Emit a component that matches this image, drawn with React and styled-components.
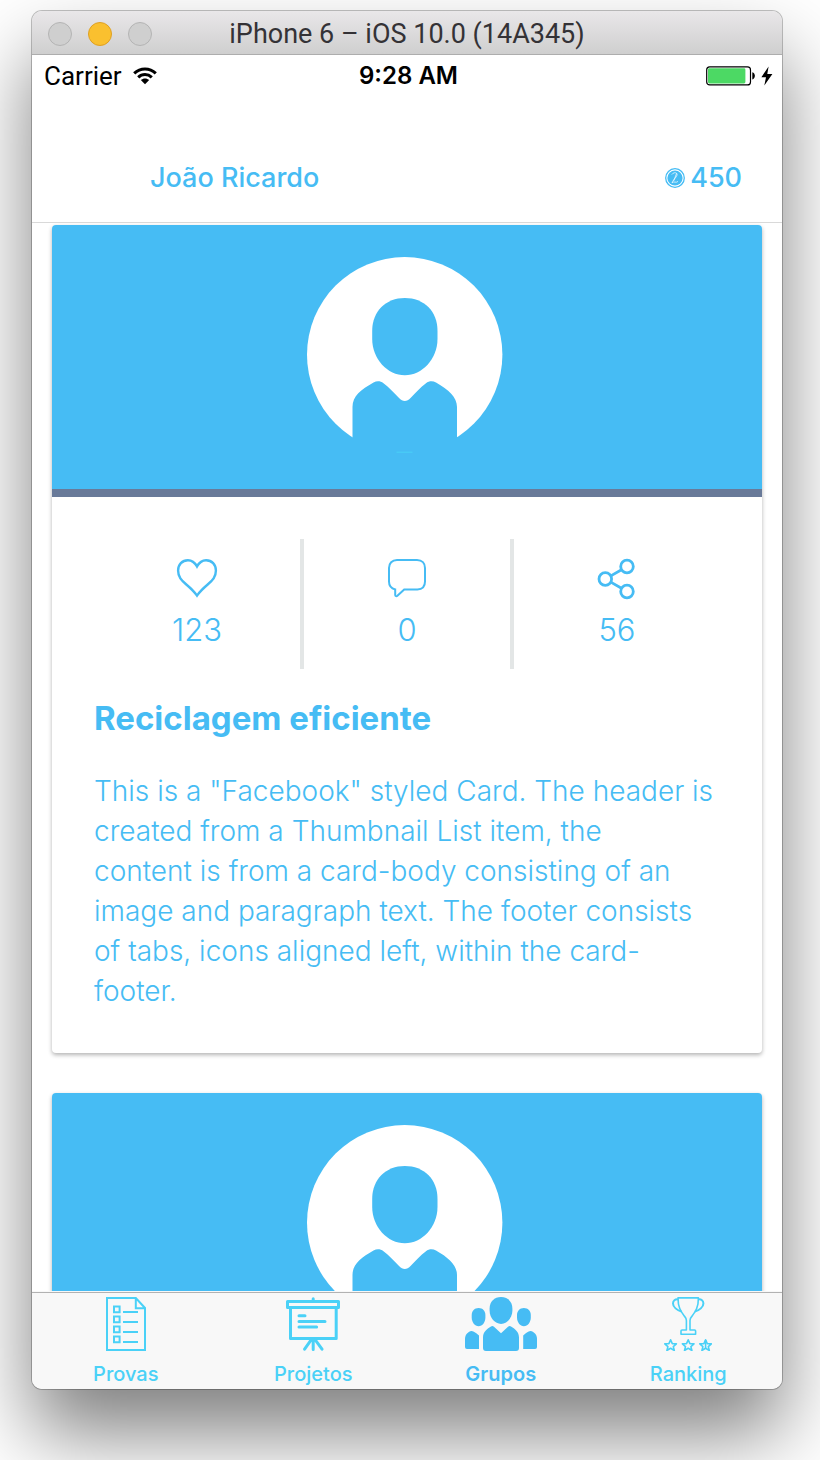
import React from "react";
import styled, { createGlobalStyle } from "styled-components";

const blue = "#46bcf4";
const cyan = "#4ad1f7";

const GlobalStyle = createGlobalStyle`
  *, *::before, *::after { box-sizing: border-box; }
  body {
    margin: 0;
    background: #ffffff;
    font-family: Inter, "Open Sans", sans-serif;
  }
  button { font: inherit; color: inherit; background: none; border: 0; padding: 0; cursor: pointer; }
  a { color: inherit; text-decoration: none; }
  svg { display: block; flex: none; }
`;

const Desktop = styled.div`
  height: 100vh;
  padding: 11px 38px 71px 32px;
  display: flex;
  overflow: hidden;
`;

const Window = styled.div`
  flex: 1;
  min-width: 0;
  display: flex;
  flex-direction: column;
  overflow: hidden;
  border-radius: 10px;
  background: #ffffff;
  box-shadow: 0 0 0 1px rgba(0, 0, 0, 0.24), 0 44px 80px rgba(0, 0, 0, 0.5);
`;

const TitleBar = styled.div`
  flex: none;
  height: 44px;
  padding: 2px 16px 0;
  display: grid;
  grid-template-columns: 1fr auto 1fr;
  align-items: center;
  border-bottom: 1px solid #adadad;
  background: linear-gradient(#e9e7e9, #cfcfcf);
`;

const Lights = styled.div`
  display: flex;
  gap: 16px;
`;

const Light = styled.button`
  width: 24px;
  height: 24px;
  border-radius: 50%;
  border: 1px solid ${(p) => (p.$active ? "#dfa023" : "#b4b4b4")};
  background: ${(p) => (p.$active ? "#fac02f" : "#cfcfcf")};
`;

const WindowTitle = styled.div`
  font-family: Roboto, sans-serif;
  font-size: 27px;
  line-height: 32px;
  color: #343236;
  white-space: nowrap;
`;

const StatusBar = styled.div`
  flex: none;
  height: 40px;
  padding: 2px 9px 0 12px;
  display: grid;
  grid-template-columns: 1fr auto 1fr;
  align-items: center;
  font-size: 24px;
  line-height: 32px;
  color: #000000;
`;

const StatusGroup = styled.div`
  display: flex;
  align-items: center;
  gap: ${(p) => p.$gap}px;
  justify-content: ${(p) => (p.$end ? "flex-end" : "flex-start")};
`;

const Carrier = styled.span`
  font-family: Roboto, sans-serif;
  font-size: 26px;
`;

const Clock = styled.span`
  font-weight: 600;
`;

const NavBar = styled.header`
  flex: none;
  height: 128px;
  padding: 0 40px 0 118px;
  display: flex;
  align-items: flex-end;
  justify-content: space-between;
  border-bottom: 1px solid #d9d9d9;
  color: ${blue};
  font-size: 27px;
  line-height: 32px;
  font-weight: 500;
`;

const UserName = styled.h1`
  margin: 0 0 28px;
  font: inherit;
`;

const Coins = styled.div`
  margin-bottom: 28px;
  display: flex;
  align-items: center;
  gap: 5px;
`;

const Feed = styled.main`
  flex: 1;
  min-height: 0;
  padding: 2px 20px 0;
  overflow-y: auto;
  scrollbar-width: none;
`;

const Card = styled.article`
  margin-bottom: 40px;
  border-radius: 4px;
  overflow: hidden;
  background: #ffffff;
  color: ${blue};
  box-shadow: 0 2px 4px rgba(0, 0, 0, 0.3);
`;

const Banner = styled.div`
  padding: 32px;
  display: flex;
  justify-content: center;
  background: ${blue};
  border-bottom: 8px solid #697a99;
  box-sizing: content-box;
`;

const CardBody = styled.div`
  padding: 42px;
`;

const Stats = styled.div`
  display: flex;
`;

const Stat = styled.button`
  && {
    flex: 1;
    box-sizing: content-box;
    height: 112px;
    padding-top: 18px;
    display: flex;
    flex-direction: column;
    align-items: center;
    gap: 9px;
    font-size: 31px;
    line-height: 40px;
    font-weight: 300;
  }
  &&:not(:last-child) {
    border-right: 4px solid #e3e6e6;
  }
`;

const CardTitle = styled.h2`
  margin: 29px 0 33px;
  font-size: 33px;
  line-height: 40px;
  font-weight: 700;
`;

const CardText = styled.p`
  margin: 0;
  font-size: 28px;
  line-height: 40px;
  font-weight: 300;
  white-space: pre-line;
`;

const TabBar = styled.nav`
  flex: none;
  height: 98px;
  display: flex;
  border-top: 1px solid #f8f8f8;
  background: #f8f8f8;
  box-shadow: inset 0 1px 0 #b2b2b2;
`;

const Tab = styled.a`
  flex: 1;
  padding-top: 5px;
  display: flex;
  flex-direction: column;
  align-items: center;
  gap: 10px;
  font-size: 20px;
  line-height: 26px;
  font-weight: ${(p) => (p.$active ? 600 : 500)};
  && { color: ${(p) => (p.$active ? blue : cyan)}; }
`;

const WifiIcon = () => (
  <svg width="24" height="18" viewBox="0 0 24 18" aria-hidden="true">
    <g fill="none" stroke="#000" strokeWidth="3">
      <path d="M1.2 6.4C7.4 .4 16.6 .4 22.8 6.4" />
      <path d="M5.2 10.4C9.2 6.6 14.8 6.6 18.8 10.4" />
    </g>
    <path d="M12 17.3 7.8 13.1C10.2 11 13.8 11 16.2 13.1Z" />
  </svg>
);

const BatteryIcon = () => (
  <svg width="50" height="20" viewBox="0 0 50 20" aria-hidden="true">
    <rect x=".7" y=".9" width="43.8" height="18" rx="3" fill="#fff" stroke="#000" strokeWidth="1.2" />
    <rect x="2" y="2.3" width="37.4" height="15.2" rx="1.4" fill="#4cd964" />
    <path d="M46.3 6.3c3.4.8 3.4 6.4 0 7.2Z" />
  </svg>
);

const BoltIcon = () => (
  <svg width="12" height="20" viewBox="0 0 12 20" aria-hidden="true">
    <path d="M7.6.5.4 11.2H5L3.3 19.5 11.4 8H6.3Z" />
  </svg>
);

const CoinIcon = () => (
  <svg width="20" height="20" viewBox="0 0 20 20" fill="none" aria-hidden="true">
    <circle cx="10" cy="10" r="9.3" stroke={blue} strokeWidth="1.3" />
    <circle cx="10" cy="10" r="7.6" fill={blue} />
    <path d="M6.8 6.6C8.2 4 12.8 4 12 7.2 11.4 9.4 8 12 7 14.8 9 12.8 11 15.4 13 13.4M11.6 5.4 8.6 13" stroke="#fff" strokeWidth=".7" />
  </svg>
);

const AvatarIcon = () => (
  <svg width="200" height="200" viewBox="0 0 200 200" aria-hidden="true">
    <circle cx="97.7" cy="97.7" r="97.7" fill="#fff" />
    <g fill={blue}>
      <path d="M97.8 41C117 41 130.5 54 130.5 74V82C130.5 102 115 118.3 97.8 118.3S65.2 102 65.2 82V74C65.2 54 79 41 97.8 41Z" />
      <path d="M45.5 200V150C45.5 139 54 132.5 66.5 125.4C70 123.6 73.4 123.8 76.5 126.2C82 130.4 87 135.8 91.8 140.8C96 145.2 99.6 145.2 103.8 140.8C108.6 135.8 113.4 130.4 119 126.2C122 123.8 125.6 123.6 129 125.4C141.5 132.5 150 140 150 150V200Z" />
    </g>
    <path d="M89.5 195.2H105.5" stroke={cyan} strokeWidth="1" />
  </svg>
);

const StatIcon = ({ children, width = 2.4 }) => (
  <svg width="44" height="44" viewBox="0 0 44 44" fill="none" stroke={blue} strokeWidth={width} aria-hidden="true">
    {children}
  </svg>
);

const HeartIcon = () => (
  <StatIcon>
    <path d="M22 9.4C19.8 5.4 16.8 3.2 12.9 3.2 7.2 3.2 3.1 7.6 3.1 13.4 3.1 20 6.4 23.4 11.3 27.5 15.2 30.8 19.2 34.6 22 38.6 24.8 34.6 28.8 30.8 32.7 27.5 37.6 23.4 40.9 20 40.9 13.4 40.9 7.6 36.8 3.2 31.1 3.2 27.2 3.2 24.2 5.4 22 9.4Z" />
  </StatIcon>
);

const CommentIcon = () => (
  <StatIcon width={2}>
    <path d="M12 3H32C37 3 40 6.4 40 11V24.6C40 29.6 37 32.4 32.4 32.4H19.2L12.4 38.8C11.4 39.6 10.2 39.2 10.2 38V32.4C6.2 31.6 4 29 4 24.6V11C4 6.4 7 3 12 3Z" />
  </StatIcon>
);

const ShareIcon = () => (
  <StatIcon width={2.8}>
    <circle cx="10.3" cy="22" r="6.3" />
    <circle cx="32" cy="9.5" r="6.3" />
    <circle cx="32" cy="34.5" r="6.3" />
    <path d="M15.8 18.9 26.5 12.7M15.8 25.1 26.5 31.3" />
  </StatIcon>
);

const ExamsIcon = () => (
  <svg width="40" height="54" viewBox="0 0 40 54" fill="none" stroke={cyan} strokeWidth="2" aria-hidden="true">
    <path d="M1 1H29.8L39 11V53H1ZM29.8 1V11.2H39" />
    <path d="M8 9.6H13.6V15.2H8ZM8 19.6H13.6V25.2H8ZM8 29.6H13.6V35.2H8ZM8 39.6H13.6V45.2H8Z" />
    <path d="M17 15H32M17 25H32M17 35H32M17 45H32" />
  </svg>
);

const ProjectsIcon = () => (
  <svg width="54" height="54" viewBox="0 0 54 54" fill="none" stroke={cyan} strokeWidth="3" strokeLinecap="round" strokeLinejoin="round" aria-hidden="true">
    <path d="M1.5 4.4H52.5V10.6H1.5ZM27.2 1.7V4" />
    <path d="M4.5 11V41.4H50.2V11" />
    <path d="M13 18.8H19M13 24.4H39M13 30H30.6" />
    <path d="M27.2 43V52.4M24.6 43.6 18.6 52.2M29.8 43.6 36 52.2" />
  </svg>
);

const GroupsIcon = () => (
  <svg width="72" height="54" viewBox="0 0 72 54" fill={blue} aria-hidden="true">
    <path d="M36 0C42.6 0 47.4 4.6 47.4 11.4V13.6C47.4 20.8 42 27 36 27S24.6 20.8 24.6 13.6V11.4C24.6 4.6 29.4 0 36 0Z" />
    <path d="M18 51V40.5C18 34.6 21.6 32.2 26 29.4Q27.6 28.6 29 29.8L36 36.2 43 29.8Q44.4 28.6 46 29.4C50.4 32.2 54 34.6 54 40.5V51Q54 54 51 54H21Q18 54 18 51Z" />
    <path d="M13.6 11C17.6 11 20.4 13.8 20.4 18V20.4C20.4 25 17.4 29.2 13.6 29.2S6.7 25 6.7 20.4V18C6.7 13.8 9.6 11 13.6 11Z" />
    <path d="M58.9 11C62.9 11 65.8 13.8 65.8 18V20.4C65.8 25 62.7 29.2 58.9 29.2S52 25 52 20.4V18C52 13.8 54.9 11 58.9 11Z" />
    <path d="M0 50V42C0 37.6 2.4 35.6 5.2 34.2Q6.8 33.6 8.4 34.4 11.4 36 14 38.6V52H2Q0 52 0 50Z" />
    <path d="M72 50V42C72 37.6 69.6 35.6 66.8 34.2Q65.2 33.6 63.6 34.4 60.6 36 58.2 38.6V52H70Q72 52 72 50Z" />
  </svg>
);

const RankingIcon = () => (
  <svg width="48" height="54" viewBox="0 0 48 54" fill="none" stroke={cyan} strokeWidth="1.6" strokeLinejoin="round" aria-hidden="true">
    <path d="M14 .9H34.4C34.4 10 32 14 27.8 19.4Q26 21.4 26 23.6V33H30.6Q31.6 33 31.6 34V37.2H17V34Q17 33 18 33H22.4V23.6Q22.4 21.4 20.6 19.4C16.4 14 14 10 14 .9Z" />
    <path d="M14.2 2.4C11 2 9 3.6 9 6.4 9 10 13 13.4 17.4 14.4M34.2 2.4C37.4 2 39.4 3.6 39.4 6.4 39.4 10 35.4 13.4 31 14.4" strokeWidth="2" />
    {[6.6, 24.2, 41.6].map((x) => (
      <path key={x} transform={`translate(${x} 48.4)`} d="M0-5.6 1.7-1.8 5.8-1.6 2.7 1.2 3.7 5.1 0 2.9-3.7 5.1-2.7 1.2-5.8-1.6-1.7-1.8Z" />
    ))}
    <path d="M41.6 43V51.3" />
  </svg>
);

const stats = [
  { label: "Curtidas", Icon: HeartIcon, value: 123 },
  { label: "Comentários", Icon: CommentIcon, value: 0 },
  { label: "Compartilhamentos", Icon: ShareIcon, value: 56 },
];

const posts = [
  {
    id: 1,
    stats,
    title: "Reciclagem eficiente",
    text: `This is a "Facebook" styled Card. The header is
      created from a Thumbnail List item, the
      content is from a card-body consisting of an
      image and paragraph text. The footer consists
      of tabs, icons aligned left, within the card-
      footer.`,
  },
  { id: 2 },
];

const tabs = [
  { label: "Provas", Icon: ExamsIcon },
  { label: "Projetos", Icon: ProjectsIcon },
  { label: "Grupos", Icon: GroupsIcon, active: true },
  { label: "Ranking", Icon: RankingIcon },
];

const PostCard = ({ post }) => (
  <Card>
    <Banner>
      <AvatarIcon />
    </Banner>
    {post.title && (
      <CardBody>
        <Stats>
          {post.stats.map(({ label, Icon, value }) => (
            <Stat key={label} type="button" aria-label={`${label}: ${value}`}>
              <Icon />
              <span>{value}</span>
            </Stat>
          ))}
        </Stats>
        <CardTitle>{post.title}</CardTitle>
        <CardText>{post.text}</CardText>
      </CardBody>
    )}
  </Card>
);

export default function App() {
  return (
    <>
      <GlobalStyle />
      <Desktop>
        <Window>
          <TitleBar>
            <Lights>
              <Light type="button" aria-label="Close" />
              <Light type="button" aria-label="Minimize" $active />
              <Light type="button" aria-label="Zoom" />
            </Lights>
            <WindowTitle>iPhone 6 – iOS 10.0 (14A345)</WindowTitle>
          </TitleBar>
          <StatusBar>
            <StatusGroup $gap={11}>
              <Carrier>Carrier</Carrier>
              <WifiIcon />
            </StatusGroup>
            <Clock>9:28 AM</Clock>
            <StatusGroup $gap={5} $end>
              <BatteryIcon />
              <BoltIcon />
            </StatusGroup>
          </StatusBar>
          <NavBar>
            <UserName>João Ricardo</UserName>
            <Coins>
              <CoinIcon />
              <span>450</span>
            </Coins>
          </NavBar>
          <Feed>
            {posts.map((post) => (
              <PostCard key={post.id} post={post} />
            ))}
          </Feed>
          <TabBar>
            {tabs.map(({ label, Icon, active }) => (
              <Tab key={label} href={`#${label.toLowerCase()}`} $active={active} aria-current={active ? "page" : undefined}>
                <Icon />
                <span>{label}</span>
              </Tab>
            ))}
          </TabBar>
        </Window>
      </Desktop>
    </>
  );
}
